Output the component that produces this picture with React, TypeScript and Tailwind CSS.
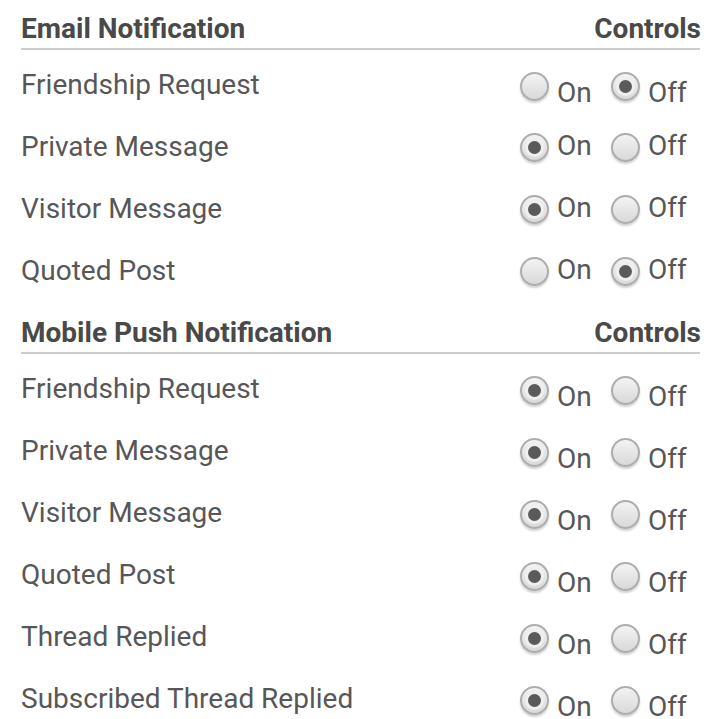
import React from "react";

type Row = { label: string; on: boolean; offset: boolean };

const email: Row[] = [
  { label: "Friendship Request", on: false, offset: true },
  { label: "Private Message", on: true, offset: false },
  { label: "Visitor Message", on: true, offset: false },
  { label: "Quoted Post", on: false, offset: false },
];

const mobile: Row[] = [
  { label: "Friendship Request", on: true, offset: true },
  { label: "Private Message", on: true, offset: true },
  { label: "Visitor Message", on: true, offset: true },
  { label: "Quoted Post", on: true, offset: true },
  { label: "Thread Replied", on: true, offset: true },
  { label: "Subscribed Thread Replied", on: true, offset: true },
];

function Radio({ checked }: { checked: boolean }) {
  return (
    <span className="relative flex h-[29px] w-[29px] shrink-0 items-center justify-center rounded-full border-2 border-[#adadad] bg-gradient-to-b from-[#f3f3f3] to-[#d9d9d9] shadow-[0_2px_2px_rgba(0,0,0,0.18)]">
      {checked && (
        <span className="h-[13px] w-[13px] rounded-full bg-[#5a5a5a] shadow-[0_0_0_3px_#efefef]" />
      )}
    </span>
  );
}

function Option({ checked, text, offset }: { checked: boolean; text: string; offset: boolean }) {
  return (
    <div className="flex items-center">
      <span className={offset ? "mt-[5px]" : "mt-[3px]"}>
        <Radio checked={checked} />
      </span>
      <span className={offset ? "ml-[8px] mt-[17px] leading-[30px]" : "ml-[8px] leading-[30px]"}>{text}</span>
    </div>
  );
}

function SettingRow({ row }: { row: Row }) {
  return (
    <div className="flex h-[62px] items-center justify-between">
      <span className="mt-[1px] leading-[30px]">{row.label}</span>
      <div className="grid w-[180px] grid-cols-[91px_89px]">
        <Option checked={row.on} text="On" offset={row.offset} />
        <Option checked={!row.on} text="Off" offset={row.offset} />
      </div>
    </div>
  );
}

function Header({ title, first }: { title: string; first: boolean }) {
  return (
    <div
      className={
        (first ? "pt-[13px] " : "pt-[16px] ") +
        "mb-[3px] flex items-center justify-between border-b-2 border-[#cccccc] pb-[3px] font-bold text-[#494949]"
      }
    >
      <span className="leading-[32px]">{title}</span>
      <span className="mr-[-1px] leading-[32px]">Controls</span>
    </div>
  );
}

export default function App() {
  return (
    <div
      className="min-h-[719px] w-[711px] bg-white pl-[21px] pr-[11px] text-[28px] text-[#575757]"
      style={{ fontFamily: "Roboto, 'Noto Sans', sans-serif" }}
    >
      <Header title="Email Notification" first={true} />
      {email.map((r) => (
        <SettingRow key={"e" + r.label} row={r} />
      ))}
      <Header title="Mobile Push Notification" first={false} />
      {mobile.map((r) => (
        <SettingRow key={"m" + r.label} row={r} />
      ))}
    </div>
  );
}
